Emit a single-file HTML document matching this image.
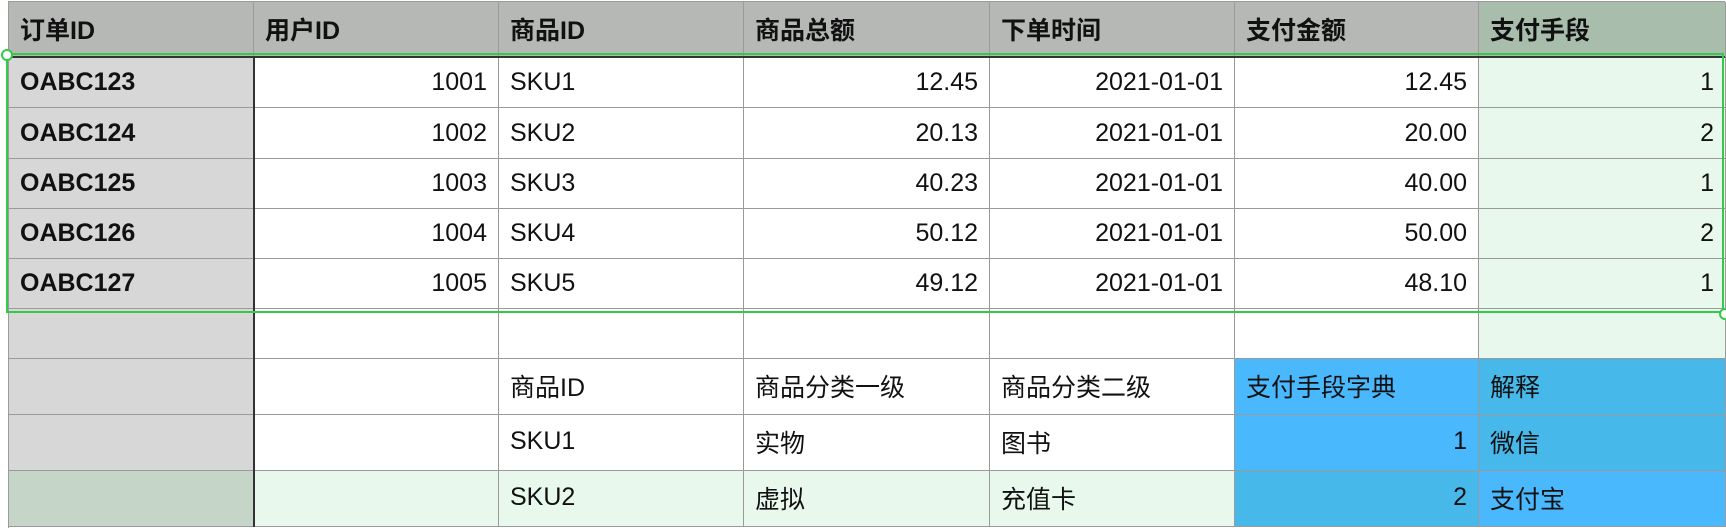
<!DOCTYPE html>
<html><head><meta charset="utf-8"><style>
body{margin:0;width:1726px;height:530px;background:#fff;position:relative;overflow:hidden;font-family:"Liberation Sans","Noto Sans CJK SC",sans-serif;font-size:25px;color:#111}
.c{position:absolute;box-sizing:border-box;border-right:1px solid #9a9a9a;border-bottom:1px solid #9a9a9a;display:flex;align-items:center;padding:0 11px;white-space:nowrap}
.r{justify-content:flex-end}
.b{font-weight:bold}
</style></head><body>
<div id="g"></div>
<div style="position:absolute;left:9px;top:1px;width:1716px;height:1px;background:#9a9a9a"></div>
<div style="position:absolute;left:8px;top:1px;width:1px;height:527px;background:#9a9a9a"></div>
<div style="position:absolute;left:9px;top:56px;width:1716px;height:2px;background:#333"></div>
<div style="position:absolute;left:253px;top:57px;width:2px;height:470px;background:#333"></div>
<div style="position:absolute;left:6px;top:53px;width:1718px;height:260px;box-sizing:border-box;border:2px solid #35c94a"></div>
<div style="position:absolute;left:1px;top:49px;width:8px;height:8px;border:2px solid #35c94a;border-radius:50%;background:#fff"></div>
<div style="position:absolute;left:1719px;top:308px;width:8px;height:8px;border:2px solid #35c94a;border-radius:50%;background:#fff"></div>
<script>
const X=[9,254,499,744,990,1235,1479,1726];
const Y=[2,57,108,159,209,259,309,359,415,471,527];
const rows=[
 [["订单ID","用户ID","商品ID","商品总额","下单时间","支付金额","支付手段"],"h"],
 [["OABC123","1001","SKU1","12.45","2021-01-01","12.45","1"]],
 [["OABC124","1002","SKU2","20.13","2021-01-01","20.00","2"]],
 [["OABC125","1003","SKU3","40.23","2021-01-01","40.00","1"]],
 [["OABC126","1004","SKU4","50.12","2021-01-01","50.00","2"]],
 [["OABC127","1005","SKU5","49.12","2021-01-01","48.10","1"]],
 [["","","","","","",""]],
 [["","","商品ID","商品分类一级","商品分类二级","支付手段字典","解释"],"d"],
 [["","","SKU1","实物","图书","1","微信"],"d"],
 [["","","SKU2","虚拟","充值卡","2","支付宝"],"d"]
];
const rightCols=[1,3,4,5,6];
let h="";
rows.forEach((row,ri)=>{
 row[0].forEach((t,ci)=>{
  let bg="#fff",cls="c";
  if(ri==0){bg=ci==6?"#a9bdad":"#b5b8b5";cls+=" b";}
  else{
   if(ci==0)bg="#d7d7d7";
   if(ri<=6&&ci==6)bg="#e8f8ec";
   if(ri>=1&&ri<=5&&ci==0)cls+=" b";
   if(ri<=5&&rightCols.includes(ci))cls+=" r";
   if(ri==9&&ci>=1&&ci<=4)bg="#e8f8ec";
   if(ri==9&&ci==0)bg="#c5d6c9";
   if(ri>=7&&ci>=5){
     const a="#4ab8fd",b2="#47b8ea";
     if(ri==9)bg=ci==5?b2:a; else bg=ci==5?a:b2;
   }
   if(ri>=8&&ci==5)cls+=" r";
  }
  let ex=ri>=7?"padding-bottom:2px;":"";
  h+=`<div class="${cls}" style="left:${X[ci]}px;top:${Y[ri]}px;width:${X[ci+1]-X[ci]}px;height:${Y[ri+1]-Y[ri]}px;background:${bg};${ex}">${t}</div>`;
 });
});
document.getElementById("g").innerHTML=h;
</script>
</body></html>
